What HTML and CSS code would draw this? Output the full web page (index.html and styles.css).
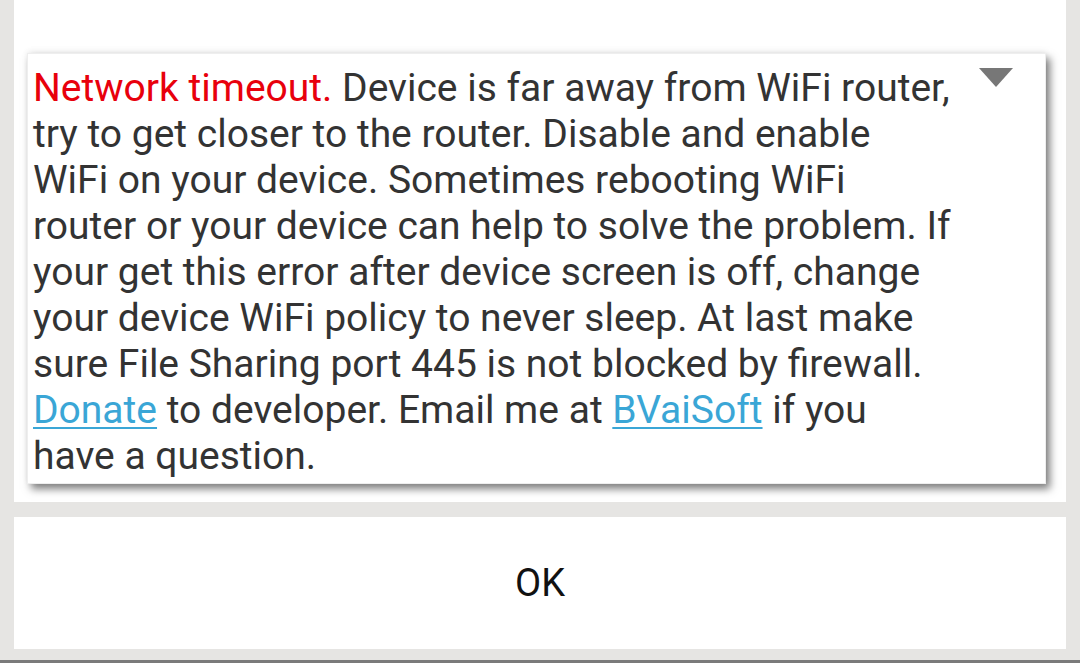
FILE: index.html
```html
<!DOCTYPE html>
<html lang="en">
<head>
  <meta charset="UTF-8">
  <meta name="viewport" content="width=device-width, initial-scale=1.0">
  <title>Network timeout</title>
  <link rel="stylesheet" href="styles.css">
</head>
<body>

  <div class="dialog">
    <!-- Message area -->
    <div class="dialog-body">
      <div class="message-card">
        <p class="message">
          <span class="error">Network timeout.</span> Device is far away from WiFi router,<br>
          try to get closer to the router. Disable and enable<br>
          WiFi on your device. Sometimes rebooting WiFi<br>
          router or your device can help to solve the problem. If<br>
          your get this error after device screen is off, change<br>
          your device WiFi policy to never sleep. At last make<br>
          sure File Sharing port 445 is not blocked by firewall.<br>
          <a href="#">Donate</a> to developer. Email me at <a href="#">BVaiSoft</a> if you<br>
          have a question.
        </p>
        <span class="collapse-arrow"></span>
      </div>
    </div>

    <!-- Button -->
    <button class="ok-btn">OK</button>
  </div>

  <div class="bottom-line"></div>

</body>
</html>
```

FILE: styles.css
```css
body {
  margin: 0;
  height: 663px;
  overflow: hidden;
  background-color: #e6e5e3;
  font-family: Roboto, "Noto Sans", sans-serif;
  display: flex;
  flex-direction: column;
}

.dialog {
  margin: 0 14px;
  flex: 1;
  display: flex;
  flex-direction: column;
}

.dialog-body {
  background: #fff;
  padding: 53px 20px 18px 13px;
}

/* card with the shadow */
.message-card {
  position: relative;
  background: #fff;
  padding: 11px 40px 4px 5px;
  border: 1px solid #eee;
  box-shadow: 4px 5px 8px rgba(0, 0, 0, 0.5), 0 -2px 6px rgba(0, 0, 0, 0.06);
}

.message {
  margin: 0;
  font-size: 39px;
  line-height: 46px;
  color: #333;
  white-space: nowrap;
}

.message .error {
  color: #e8000c;
}

.message a {
  color: #3aa6d6;
  text-decoration: underline;
  text-underline-offset: 4px;
  text-decoration-thickness: 2px;
}

.collapse-arrow {
  position: absolute;
  top: 14px;
  right: 32px;
  width: 0;
  height: 0;
  border-left: 17px solid transparent;
  border-right: 17px solid transparent;
  border-top: 19px solid #777;
}

.ok-btn {
  margin-top: 15px;
  height: 132px;
  border: none;
  background: #fff;
  font-family: Roboto, "Noto Sans", sans-serif;
  font-size: 38px;
  color: #111;
  cursor: pointer;
}

.bottom-line {
  margin-top: 11px;
  height: 3px;
  background: #7a7a7a;
}
```
